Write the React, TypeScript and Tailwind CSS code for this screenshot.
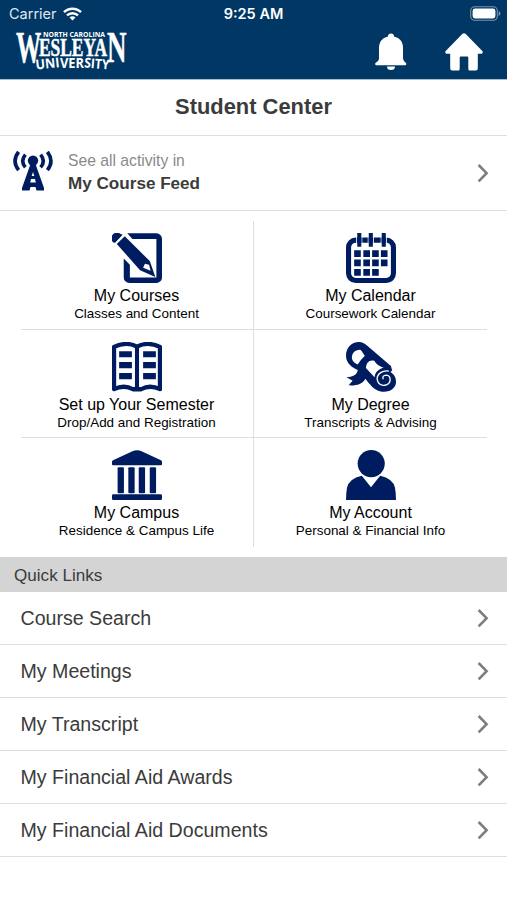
import type { ReactNode } from 'react';

const quickLinks = [
  'Course Search',
  'My Meetings',
  'My Transcript',
  'My Financial Aid Awards',
  'My Financial Aid Documents',
];

function Chevron() {
  return (
    <svg width="12" height="20" viewBox="0 0 12 20" fill="none" stroke="#7d7d7d" strokeWidth="2.6">
      <path d="M1.6 2 9.6 10.200 1.600 18.400" />
    </svg>
  );
}

function Logo() {
  return (
    <svg width="116" height="46" viewBox="0 0 116 46" fill="#fff" fontFamily="'Liberation Serif', serif" fontWeight="700">
      <text x="29" y="8.800" fontSize="7.400" textLength="62" lengthAdjust="spacingAndGlyphs" fontFamily="'Open Sans', sans-serif">
        NORTH CAROLINA
      </text>
      <g stroke="#fff" strokeWidth=".5">
        <text transform="translate(2 34) scale(.56 1)" fontSize="45">W</text>
        <text x="25" y="28" fontSize="24.500" textLength="68" lengthAdjust="spacingAndGlyphs">ESLEYA</text>
        <text transform="translate(93 34) scale(.6 1)" fontSize="45">N</text>
      </g>
      <g fontSize="13.500" fontFamily="'Open Sans', sans-serif">
        <text transform="translate(22 41.500) rotate(-6)" textLength="24" lengthAdjust="spacingAndGlyphs">UNI</text>
        <text x="46" y="39.600" textLength="24" lengthAdjust="spacingAndGlyphs">VER</text>
        <text transform="translate(70 39.300) rotate(5)" textLength="25" lengthAdjust="spacingAndGlyphs">SITY</text>
      </g>
    </svg>
  );
}

function StatusBar() {
  return (
    <div className="grid h-7 grid-cols-3 items-center pl-[9px] pr-[6px] font-['Inter',sans-serif] text-[14.5px] text-white">
      <div className="flex items-center gap-[6px] text-[#dfe8ef]">
        <span>Carrier</span>
        <svg width="19" height="14" viewBox="0 0 19 14" fill="none" stroke="#fff" strokeWidth="2.5">
          <path d="M1 5.2a12 12 0 0 1 17 0M4 8.4a7.8 7.8 0 0 1 11 0" />
          <path d="m9.5 13.6-3-3a4.2 4.2 0 0 1 6 0Z" fill="#fff" stroke="none" />
        </svg>
      </div>
      <span className="pr-[3px] text-center font-semibold">9:25 AM</span>
      <svg className="-mt-[2px] justify-self-end" width="31" height="15" viewBox="0 0 31 15">
        <rect x=".7" y=".7" width="26.6" height="13.6" rx="4" fill="none" stroke="#7895ae" strokeWidth="1.1" />
        <rect x="2.6" y="2.6" width="22.8" height="9.8" rx="2.4" fill="#fff" />
        <path d="M28.6 5v5q1.9-1 1.9-2.5T28.6 5" fill="#7895ae" />
      </svg>
    </div>
  );
}

function FeedIcon() {
  return (
    <svg className="-mt-[4px]" width="40" height="40" viewBox="0 0 40 40" fill="none" stroke="#001c60" strokeWidth="3.600">
      <path d="M5.600.8Q-1.500 10 5.600 19.200M12.400 3.600Q7 10 12.400 16.200M34.400.8Q41.500 10 34.400 19.200M27.600 3.600Q33 10 27.600 16.200" />
      <circle cx="20" cy="9.600" r="5.200" fill="#001c60" stroke="none" />
      <path
        d="M17.500 13h5L31 37v2.500h-7.500l-1-3.500h-5l-1 3.500H9V37ZM20 21l-1.300 4h2.600ZM18 28l-.8 3.400h5.600L22 28Z"
        fill="#001c60"
        fillRule="evenodd"
        stroke="none"
      />
    </svg>
  );
}

function TileIcon({ children }: { children: ReactNode }) {
  return (
    <svg className="shrink-0" width="50" height="50" viewBox="0 0 49 49" fill="#001c60">
      {children}
    </svg>
  );
}

const tiles = [
  {
    title: 'My Courses',
    text: 'Classes and Content',
    icon: (
      <TileIcon>
        <path d="M15 .3h28.500a5.500 5.500 0 0 1 5.500 5.500v37.700a5.500 5.500 0 0 1-5.500 5.500H17a5.500 5.500 0 0 1-5.500-5.500V25l6 6v12.500h26V5.800H20Z" />
        <path d="M4.700 10.700 12.500 3.200 37 27.500 42.500 43 27.500 36.500Z" />
        <path d="M1.300 9.200a5 5 0 0 1 7.200-8.200L10.500 1.700 3 9.500Z" />
        <path d="m30.500 34 1.800-3.800 4 1 1.500 5.800Z" fill="#fff" />
      </TileIcon>
    ),
  },
  {
    title: 'My Calendar',
    text: 'Coursework Calendar',
    icon: (
      <TileIcon>
        <rect x="2.500" y="7" width="44" height="39.500" rx="7" fill="#fff" stroke="#001c60" strokeWidth="5" />
        <path d="M10 4h.8v9.500H10ZM15.200 4h.8v9.500h-.8ZM21.300 4h.8v9.500h-.8ZM26.500 4h.8v9.500h-.8ZM34 4h.8v9.500H34ZM39.200 4h.8v9.500h-.8Z" fill="#fff" />
        <path d="M11 0h4v13.500h-4ZM22.300 0h4v13.500h-4ZM35 0h4v13.500h-4Z" />
        <path d="M8 17h6.500v6.500H8ZM17 17h6.500v6.500H17ZM25.600 17h6.500v6.500h-6.500ZM34.200 17h6.500v6.500h-6.500ZM8 26h6.500v6.500H8ZM17 26h6.500v6.500H17ZM25.600 26h6.500v6.500h-6.500ZM34.200 26h6.500v6.500h-6.500ZM8 35.300h6.500v6.500H8ZM17 35.300h6.500v6.500H17ZM25.600 35.300h6.500v6.500h-6.500Z" />
      </TileIcon>
    ),
  },
  {
    title: 'Set up Your Semester',
    text: 'Drop/Add and Registration',
    icon: (
      <TileIcon>
        <path
          d="M2 4.800Q14-.8 24.500 4.500 35-.8 47 4.800V46.200Q37 41.500 28.500 46.300h-8Q12 41.500 2 46.200Z"
          fill="#fff"
          stroke="#001c60"
          strokeWidth="4.200"
          strokeLinejoin="round"
        />
        <path d="M22.500 4h4v42h-4Z" />
        <path d="M7 9h12.500v6H7ZM7 19.700h12.500v6H7ZM7 30.500h12.500v6H7ZM30.500 9H43v6H30.500ZM30.500 19.700H43v6H30.500ZM30.500 30.500H43v6H30.500Z" />
      </TileIcon>
    ),
  },
  {
    title: 'My Degree',
    text: 'Transcripts & Advising',
    icon: (
      <TileIcon>
        <path d="M13 0C5 0 0 6 0 13.500 0 21 6 25 11.500 27.500 11 31.500 8 34.300.5 34.500L6.500 38 2.500 42.500C10 43 16 41.500 19 36 23 41 27 47 34 48.500 42 50 49 46 49 39 49 34 46.500 31.500 43.500 29.500L45.200 28 44 23.500 20 3C17.500 1 15.500 0 13 0Z" />
        <path d="M5.800 16C5.500 11 9 7.500 14 7.700 16.500 9.500 16.500 12 18.500 13.500 15.500 16.500 13.500 19 11.500 22 8 20.500 6 18.500 5.800 16ZM19.500 25.500C20 20 23 17 28 18.500 29 21 33 24 37 25 32 26.500 28.500 29.500 28 34.500Z" fill="#fff" />
        <path d="M42 28.500C36 27.500 30.500 31 30.500 36 31 41.500 35.500 43.500 39.500 42 44.500 40 44.500 33 39.500 32.500 36.500 32.500 35.500 34.500 36.500 36.500" fill="none" stroke="#fff" strokeWidth="1.300" />
      </TileIcon>
    ),
  },
  {
    title: 'My Campus',
    text: 'Residence & Campus Life',
    icon: (
      <TileIcon>
        <path d="M1 10 19.500 1.500Q24.500-1 29.500 1.500L48 10q1 .5 1 1.500V14q0 1-1 1H1q-1 0-1-1V11.500Q0 10.500 1 10Z" />
        <rect x="5.500" y="16.800" width="6.200" height="25.700" rx="1" />
        <rect x="16" y="16.800" width="6.200" height="25.700" rx="1" />
        <rect x="26.200" y="16.800" width="6.200" height="25.700" rx="1" />
        <rect x="37" y="16.800" width="6.200" height="25.700" rx="1" />
        <rect y="43.300" width="49" height="5.700" rx="1.200" />
      </TileIcon>
    ),
  },
  {
    title: 'My Account',
    text: 'Personal & Financial Info',
    icon: (
      <TileIcon>
        <circle cx="24.700" cy="13.300" r="13.300" />
        <path d="M15.500 25.300 24.500 36.500 33.500 25.300Q46 28 48 37 49 42 49 49H0Q0 42 1 37 3 28 15.500 25.300Z" />
      </TileIcon>
    ),
  },
];

export default function App() {
  return (
    <main className="flex min-h-[900px] flex-col bg-white font-['Liberation_Sans',Arial,sans-serif] text-[#3b3b3b]">
      <header className="h-20 border-b border-[#a9bac8] bg-[#003764]">
        <StatusBar />
        <div className="flex items-start justify-between pl-[14px] pr-[24px]">
          <Logo />
          <div className="flex gap-[38px] pt-[5px]">
            <svg width="32" height="38" viewBox="0 0 32 38" fill="#fff">
              <path d="M13 3.500a3 3 0 0 1 6 0C25 5 28 9 28 15v10.500q0 2 3 4.500.8 1.500-.5 2.200H1Q-.3 31.500.5 30q3.500-2.500 3.500-4.500V15C4 9 7 5 13 3.500ZM12 33.500h8a4 3.600 0 0 1-8 0Z" />
            </svg>
            <svg width="38" height="38" viewBox="0 0 38 38" fill="#fff">
              <path d="M17.500.8q1.500-1.300 3 0L37.300 18q.9 1.200 0 2.200-.5.600-1.500.6h-3v14.700q0 2-2 2h-6q-1.500 0-1.500-1.500V24.500q0-1-1-1h-6.600q-1 0-1 1V36q0 1.500-1.500 1.500H7.200q-2 0-2-2V20.800h-3q-1 0-1.500-.6-.9-1 0-2.200Z" />
            </svg>
          </div>
        </div>
      </header>

      <h1 className="flex h-14 items-center justify-center border-b border-[#dedede] text-[21.9px] font-bold">
        Student Center
      </h1>

      <section className="flex h-[75px] items-center border-b border-[#dedede] pl-[13px] pr-[18px]">
        <FeedIcon />
        <div className="-mt-[2px] ml-[15px] flex-1">
          <p className="text-[15.700px] leading-[23px] text-[#8a8a8a]">See all activity in</p>
          <p className="text-[17.100px] font-bold leading-[23px]">My Course Feed</p>
        </div>
        <Chevron />
      </section>

      <section className="ml-[21px] mr-[20px] mt-[10px] grid grid-cols-[233px_233px] text-black">
        {tiles.map((tile, i) => (
          <div
            key={tile.title}
            className={`flex h-[108.500px] flex-col items-center border-[#dedede] pt-[12px] ${i % 2 === 0 ? 'border-r pr-px' : ''} ${i < 4 ? 'border-b' : ''}`}
          >
            {tile.icon}
            <h2 className="mt-[4px] text-[16px] leading-[18px]">{tile.title}</h2>
            <p className="text-[13.450px] leading-[17px]">{tile.text}</p>
          </div>
        ))}
      </section>

      <h2 className="mt-[10px] flex h-[35px] items-center bg-[#d4d4d4] pl-[14px] pt-[4px] text-[17.100px]">Quick Links</h2>
      <ul>
        {quickLinks.map((link) => (
          <li
            key={link}
            className="flex h-[53px] items-center justify-between border-b border-[#dedede] pl-[20.500px] pr-[18px] text-[19.600px]"
          >
            <span className="pt-[2px]">{link}</span>
            <Chevron />
          </li>
        ))}
      </ul>
    </main>
  );
}
